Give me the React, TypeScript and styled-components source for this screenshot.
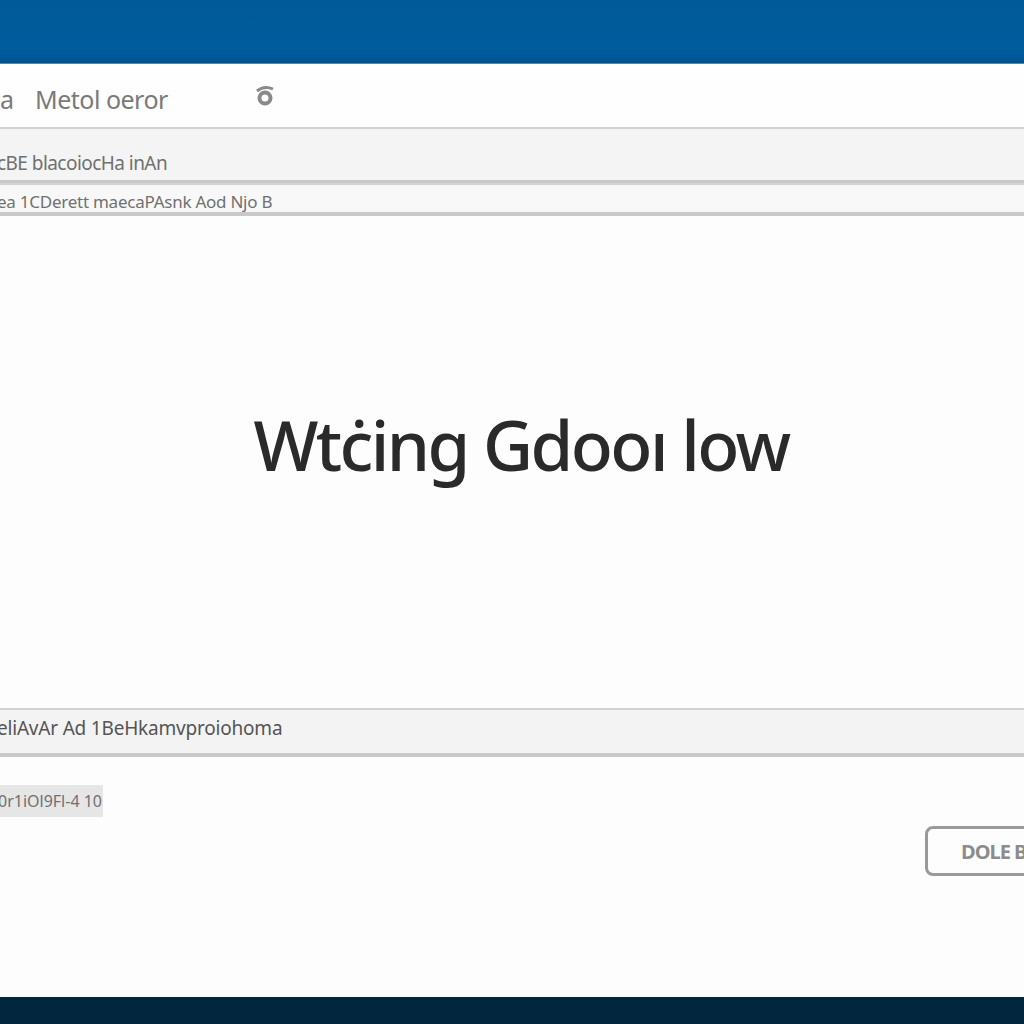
import React from "react";
import styled, { createGlobalStyle } from "styled-components";

const Global = createGlobalStyle`
  html, body { margin: 0; padding: 0; background: #fdfdfd; }
  body { font-family: "Noto Sans", "Open Sans", sans-serif; }
`;

const Page = styled.div`
  width: 1024px;
  height: 1024px;
  overflow: hidden;
  display: flex;
  flex-direction: column;
  background: #fdfdfd;
`;

const TopBand = styled.div`
  height: 63px;
  flex: none;
  background: linear-gradient(180deg, #005a9a 0%, #005c9c 85%, #00518c 100%);
  border-bottom: 1px solid #3f8dbd;
`;

const Header = styled.header`
  height: 63px;
  flex: none;
  display: flex;
  align-items: center;
  box-sizing: border-box;
  background: #fefefe;
  color: #7a7a7a;
  font-size: 25px;
  letter-spacing: -0.5px;
`;

const Clipped = styled.span`
  margin-left: 0;
  width: 35px;
  flex: none;
  margin-top: 7px;
`;

const Title = styled.span`
  width: 219px;
  flex: none;
  margin-top: 7px;
  white-space: nowrap;
`;

const Glyph = styled.svg`
  width: 24px;
  height: 26px;
  flex: none;
  margin-top: -2px;
`;

const Strip = styled.div<{ $h: number; $bg: string; $line: number }>`
  height: ${(p) => p.$h}px;
  flex: none;
  display: flex;
  align-items: center;
  background: ${(p) => p.$bg};
  border-top: 2px solid #d2d2d2;
  border-bottom: ${(p) => p.$line}px solid #c9c9c9;
  white-space: nowrap;
`;

const StripText = styled.span<{ $size: number; $color: string; $shift: number; $track: number }>`
  font-size: ${(p) => p.$size}px;
  color: ${(p) => p.$color};
  margin-left: -3px;
  margin-top: ${(p) => p.$shift * 2}px;
  letter-spacing: ${(p) => p.$track}px;
`;

const Main = styled.main`
  height: 492px;
  flex: none;
  display: flex;
  align-items: center;
  justify-content: center;
  padding-left: 18px;
  box-sizing: border-box;
  background: #fdfdfd;
`;

const Big = styled.h1`
  margin: 0 0 36px;
  font-size: 69px;
  font-weight: 500;
  line-height: 1;
  color: #2a2a2a;
  white-space: nowrap;
  letter-spacing: -2.6px;
`;

const Footer = styled.footer`
  flex: 1;
  display: flex;
  flex-direction: column;
  padding-top: 28px;
  background: #fdfdfd;
`;

const Badge = styled.div`
  align-self: flex-start;
  width: 103px;
  height: 32px;
  overflow: hidden;
  display: flex;
  align-items: center;
  background: #e6e6e6;
  color: #707070;
  font-size: 16px;
  white-space: nowrap;
`;

const BadgeText = styled.span`
  margin-left: -2px;
`;

const Action = styled.button`
  align-self: flex-start;
  margin: 9px 0 0 925px;
  width: 140px;
  height: 50px;
  flex: none;
  padding: 0 0 0 33px;
  text-align: left;
  border: 3px solid #9a9a9a;
  border-radius: 8px;
  background: #fdfdfd;
  color: #8c8c8c;
  font-family: inherit;
  font-size: 20px;
  font-weight: 700;
  letter-spacing: -1px;
  white-space: nowrap;
`;

const BottomBand = styled.div`
  height: 27px;
  flex: none;
  background: #03263f;
`;

export default function App() {
  return (
    <Page>
      <Global />
      <TopBand />
      <Header>
        <Clipped>a</Clipped>
        <Title>Metol oeror</Title>
        <Glyph viewBox="0 0 24 26" fill="none" stroke="#8a8a8a">
          <circle cx="11" cy="16" r="5.5" strokeWidth="4" />
          <path d="M3 9 Q10 3 19 7" strokeWidth="3" />
        </Glyph>
      </Header>
      <Strip $h={51} $bg="#f4f4f4" $line={3}>
        <StripText $size={19} $color="#707070" $shift={8} $track={-0.55}>cBE blacoiocHa inAn</StripText>
      </Strip>
      <Strip $h={27} $bg="#f8f8f8" $line={4}>
        <StripText $size={17} $color="#707070" $shift={3} $track={-0.25}>ea 1CDerett maecaPAsnk Aod Njo B</StripText>
      </Strip>
      <Main>
        <Big>Wtċing Gdooı low</Big>
      </Main>
      <Strip $h={43} $bg="#f3f3f3" $line={4}>
        <StripText $size={19} $color="#555" $shift={-4} $track={-0.2}>eliAvAr Ad 1BeHkamvproiohoma</StripText>
      </Strip>
      <Footer>
        <Badge><BadgeText>0r1iOl9Fl-4 10</BadgeText></Badge>
        <Action>DOLE B</Action>
      </Footer>
      <BottomBand />
    </Page>
  );
}
